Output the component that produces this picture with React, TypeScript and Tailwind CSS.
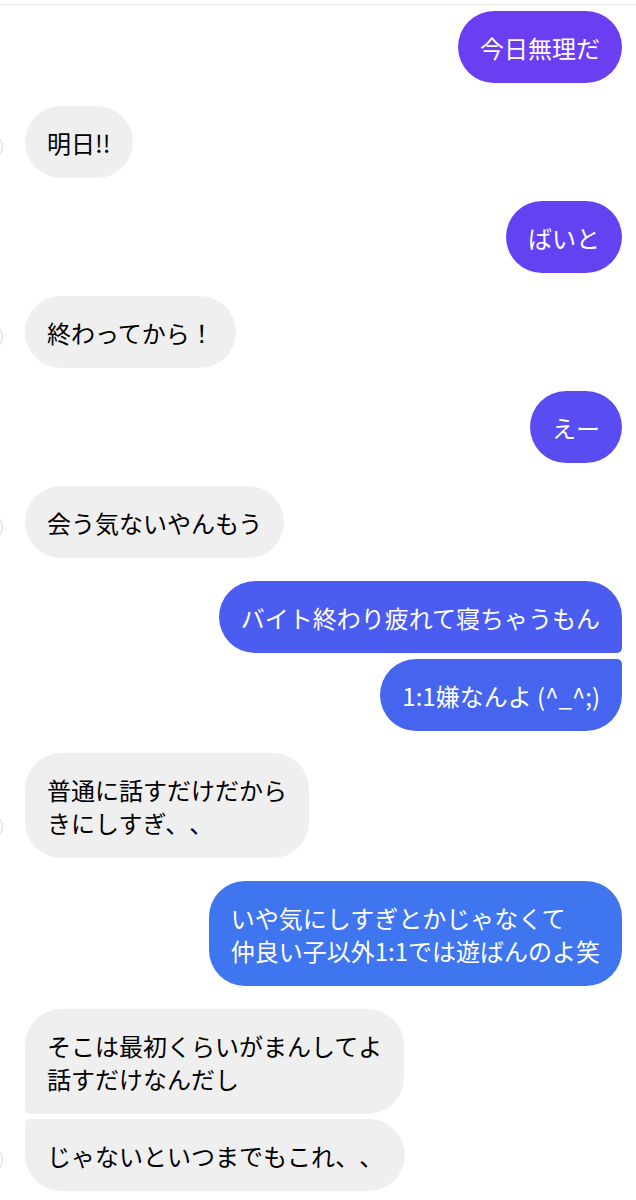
import React from "react";

type Msg = {
  id: number;
  mine: boolean;
  lines: string[];
  color?: string;
  shape: string;
  avatar?: boolean;
  gap: string;
};

const messages: Msg[] = [
  { id: 1, mine: true, lines: ["今日無理だ"], color: "bg-[#6b3ef1]", shape: "rounded-[36px]", gap: "mt-[6px]" },
  { id: 2, mine: false, lines: ["明日!!"], shape: "rounded-[36px]", avatar: true, gap: "mt-[23px]" },
  { id: 3, mine: true, lines: ["ばいと"], color: "bg-[#6343f1]", shape: "rounded-[36px]", gap: "mt-[23px]" },
  { id: 4, mine: false, lines: ["終わってから！"], shape: "rounded-[36px]", avatar: true, gap: "mt-[23px]" },
  { id: 5, mine: true, lines: ["えー"], color: "bg-[#594cf0]", shape: "rounded-[36px]", gap: "mt-[23px]" },
  { id: 6, mine: false, lines: ["会う気ないやんもう"], shape: "rounded-[36px]", avatar: true, gap: "mt-[23px]" },
  {
    id: 7,
    mine: true,
    lines: ["バイト終わり疲れて寝ちゃうもん"],
    color: "bg-[#4b5cf0]",
    shape: "rounded-[36px] rounded-br-[5px]",
    gap: "mt-[23px]",
  },
  {
    id: 8,
    mine: true,
    lines: ["1:1嫌なんよ (^_^;)"],
    color: "bg-[#4665ef]",
    shape: "rounded-[36px] rounded-tr-[5px]",
    gap: "mt-[6px]",
  },
  {
    id: 9,
    mine: false,
    lines: ["普通に話すだけだから", "きにしすぎ、、"],
    shape: "rounded-[36px]",
    avatar: true,
    gap: "mt-[22px]",
  },
  {
    id: 10,
    mine: true,
    lines: ["いや気にしすぎとかじゃなくて", "仲良い子以外1:1では遊ばんのよ笑"],
    color: "bg-[#3f76f0]",
    shape: "rounded-[36px]",
    gap: "mt-[23px]",
  },
  {
    id: 11,
    mine: false,
    lines: ["そこは最初くらいがまんしてよ", "話すだけなんだし"],
    shape: "rounded-[36px] rounded-bl-[5px]",
    gap: "mt-[23px]",
  },
  {
    id: 12,
    mine: false,
    lines: ["じゃないといつまでもこれ、、"],
    shape: "rounded-[36px] rounded-tl-[5px]",
    avatar: true,
    gap: "mt-[5px]",
  },
];

function Bubble({ m }: { m: Msg }) {
  const tone = m.mine ? `${m.color} text-white` : "bg-[#efefef] text-black";
  return (
    <div
      className={`${tone} ${m.shape} px-[22px] py-[19.5px] text-[24px] leading-[33px] whitespace-nowrap [text-spacing-trim:space-all]`}
    >
      {m.lines.map((l, i) => (
        <div key={i}>{l}</div>
      ))}
    </div>
  );
}

export default function App() {
  return (
    <div
      lang="ja"
      className="w-[636px] h-[1200px] bg-white overflow-hidden"
      style={{ fontFamily: '"Noto Sans CJK JP", sans-serif' }}
    >
      <div className="h-[4px]" />
      <div className="border-t border-[#e6e6e6]" />
      <div className="flex flex-col pr-[14px]">
        {messages.map((m) =>
          m.mine ? (
            <div key={m.id} className={`${m.gap} flex justify-end`}>
              <Bubble m={m} />
            </div>
          ) : (
            <div key={m.id} className={`${m.gap} flex items-end`}>
              {/* アバター（左端で切れている） */}
              <div className="w-[25px] shrink-0 flex items-end pb-[17px] overflow-hidden">
                {m.avatar ? (
                  <div className="w-[28px] h-[28px] -ml-[25px] shrink-0 rounded-full border border-[#d4d4d4] bg-white" />
                ) : null}
              </div>
              <Bubble m={m} />
            </div>
          )
        )}
      </div>
    </div>
  );
}
